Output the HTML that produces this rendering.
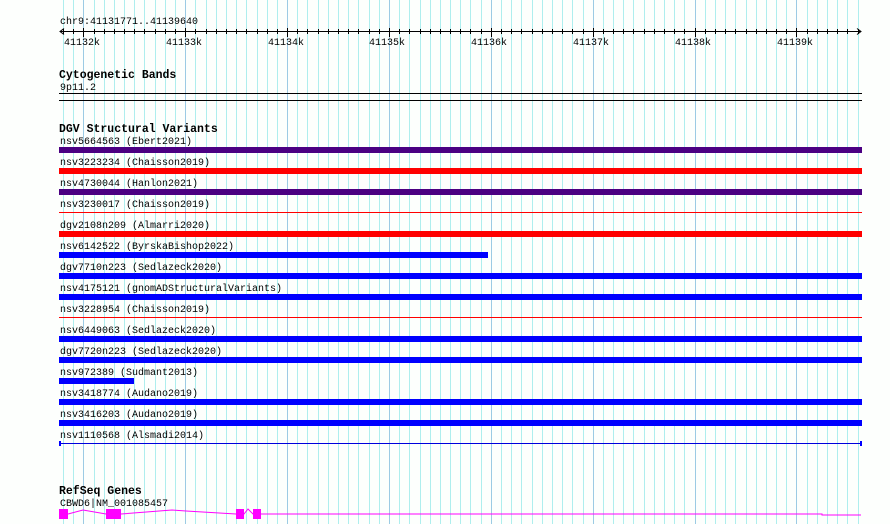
<!DOCTYPE html>
<html><head><meta charset="utf-8"><style>
html,body{margin:0;padding:0;background:#fdfffd;}
svg{display:block}
text{font-family:"Liberation Mono","DejaVu Sans Mono",monospace;font-size:10px;fill:#000}
.b{font-weight:bold;font-size:11.5px}
</style></head><body>
<svg id="s" width="890" height="524" xmlns="http://www.w3.org/2000/svg">
<g id="grid"></g>
<g id="ruler" stroke="#000" stroke-width="1"><line x1="60" y1="31.5" x2="861" y2="31.5"/>
<polyline points="64,28.5 60,31.5 64,34.5" fill="none"/><polyline points="857,28.5 861,31.5 857,34.5" fill="none"/></g>
<text x="60" y="24">chr9:41131771..41139640</text>
<text x="64" y="45">41132k</text><text x="166" y="45">41133k</text><text x="268" y="45">41134k</text><text x="369" y="45">41135k</text><text x="471" y="45">41136k</text><text x="573" y="45">41137k</text><text x="675" y="45">41138k</text><text x="777" y="45">41139k</text>
<text class="b" x="59" y="78">Cytogenetic Bands</text>
<text x="60" y="90">9p11.2</text>
<rect x="59" y="93" width="803" height="1" fill="#000"/>
<rect x="59" y="100" width="803" height="1" fill="#000"/>
<text class="b" x="59" y="132">DGV Structural Variants</text>
<text x="60" y="144">nsv5664563 (Ebert2021)</text>
<text x="60" y="165">nsv3223234 (Chaisson2019)</text>
<text x="60" y="186">nsv4730044 (Hanlon2021)</text>
<text x="60" y="207">nsv3230017 (Chaisson2019)</text>
<text x="60" y="228">dgv2108n209 (Almarri2020)</text>
<text x="60" y="249">nsv6142522 (ByrskaBishop2022)</text>
<text x="60" y="270">dgv7710n223 (Sedlazeck2020)</text>
<text x="60" y="291">nsv4175121 (gnomADStructuralVariants)</text>
<text x="60" y="312">nsv3228954 (Chaisson2019)</text>
<text x="60" y="333">nsv6449063 (Sedlazeck2020)</text>
<text x="60" y="354">dgv7720n223 (Sedlazeck2020)</text>
<text x="60" y="375">nsv972389 (Sudmant2013)</text>
<text x="60" y="396">nsv3418774 (Audano2019)</text>
<text x="60" y="417">nsv3416203 (Audano2019)</text>
<text x="60" y="438">nsv1110568 (Alsmadi2014)</text>
<rect x="59" y="147" width="803" height="6" fill="#4b0082"/>
<rect x="59" y="168" width="803" height="6" fill="#ff0000"/>
<rect x="59" y="189" width="803" height="6" fill="#4b0082"/>
<rect x="59" y="212" width="803" height="1" fill="#ff0000"/>
<rect x="59" y="231" width="803" height="6" fill="#ff0000"/>
<rect x="59" y="252" width="429" height="6" fill="#0000ff"/>
<rect x="59" y="273" width="803" height="6" fill="#0000ff"/>
<rect x="59" y="294" width="803" height="6" fill="#0000ff"/>
<rect x="59" y="317" width="803" height="1" fill="#ff0000"/>
<rect x="59" y="336" width="803" height="6" fill="#0000ff"/>
<rect x="59" y="357" width="803" height="6" fill="#0000ff"/>
<rect x="59" y="378" width="75" height="6" fill="#0000ff"/>
<rect x="59" y="399" width="803" height="6" fill="#0000ff"/>
<rect x="59" y="420" width="803" height="6" fill="#0000ff"/>
<rect x="59" y="443" width="803" height="1" fill="#0000dd"/>
<rect x="59" y="441" width="2" height="5" fill="#0000ff"/>
<rect x="860" y="441" width="2" height="5" fill="#0000ff"/>
<text class="b" x="59" y="494">RefSeq Genes</text>
<text x="60" y="506">CBWD6|NM_001085457</text>
<polyline fill="none" stroke="#ff00ff" stroke-width="1" points="68,514 83,510 106,514 121,514 172,510 186,511 236,514 244,514 248,509 253,514 261,514 822,514 822,515 861,515"/>
<g fill="#ff00ff"><rect x="59" y="509" width="9" height="10"/><rect x="106" y="509" width="15" height="10"/><rect x="236" y="509" width="8" height="10"/><rect x="253" y="509" width="8" height="10"/></g>
</svg>
<script>
var g=document.getElementById('grid'),r=document.getElementById('ruler'),ns='http://www.w3.org/2000/svg';
for(var i=0;i<=78;i++){var bp=41131800+i*100;var x=Math.round(60+(bp-41131771)*0.10188)+0.5;
var maj=(bp%1000===0);
var l=document.createElementNS(ns,'line');l.setAttribute('x1',x);l.setAttribute('x2',x);l.setAttribute('y1',0);l.setAttribute('y2',524);
l.setAttribute('stroke',maj?'#9ccbe4':'#aeeeee');g.appendChild(l);
var t=document.createElementNS(ns,'line');t.setAttribute('x1',x);t.setAttribute('x2',x);t.setAttribute('y1',maj?28:29);t.setAttribute('y2',maj?37:34);r.appendChild(t);}
</script>
</body></html>
